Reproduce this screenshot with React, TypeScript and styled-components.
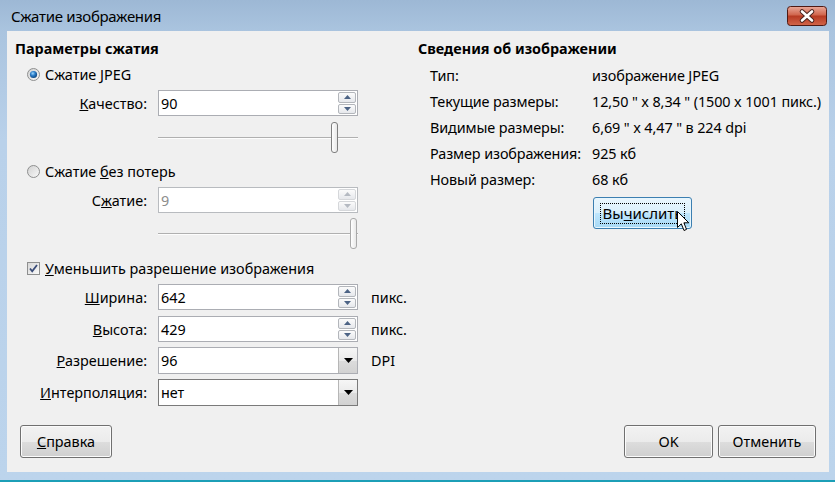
import { Fragment } from 'react'
import styled, { createGlobalStyle } from 'styled-components'

const GlobalStyle = createGlobalStyle`
  html, body {
    margin: 0;
    padding: 0;
    width: 835px;
    height: 482px;
    overflow: hidden;
  }
  body {
    font-family: "Noto Sans", "Open Sans", sans-serif;
    font-size: 14.4px;
    color: #000;
  }
  * { box-sizing: border-box; }
`

const Window = styled.div`
  width: 835px;
  height: 482px;
  display: flex;
  flex-direction: column;
  background: linear-gradient(#9db8d5 0px, #aac4df 31px, #b9d1ea 140px, #bcd4ec 100%);
  border-bottom: 2px solid #1c9fb7;
`

const TitleBar = styled.div`
  height: 31px;
  flex: none;
  display: flex;
  align-items: center;
  justify-content: space-between;
  padding: 0 8px 0 11px;
`

const Title = styled.span`
  font-size: 15px;
  letter-spacing: -0.3px;
`

const Panel = styled.div`
  flex: 1;
  margin: 0 6px 8px 7px;
  background: #f0f0f0;
  display: flex;
  flex-direction: column;
  padding: 10px 13px 14px 8px;
`

const Main = styled.div`
  flex: 1;
  display: flex;
`

const LeftCol = styled.div`
  width: 403px;
  flex: none;
  display: flex;
  flex-direction: column;
`

const RightCol = styled.div`
  flex: 1;
  min-width: 0;
  display: flex;
  flex-direction: column;
  white-space: nowrap;
`

const Heading = styled.div`
  font-weight: 700;
  line-height: 16px;
  height: 16px;
`

const OptionRow = styled.div<{ $mt: number }>`
  margin-top: ${p => p.$mt}px;
  height: 16px;
  display: flex;
  align-items: center;
  gap: 5px;
  padding-left: 12px;
`

const FieldRow = styled.div<{ $mt: number; $h: number }>`
  margin-top: ${p => p.$mt}px;
  height: ${p => p.$h}px;
  display: grid;
  grid-template-columns: 143px 200px auto;
  align-items: center;
`

const Label = styled.span`
  text-align: right;
  padding-right: 11px;
`

const Unit = styled.span`
  padding-left: 13px;
`

const TextBox = styled.div<{ $disabled?: boolean; $dark?: boolean }>`
  height: 100%;
  display: flex;
  align-items: center;
  padding-left: 2px;
  background: #fff;
  border: 1px solid ${p => (p.$dark ? '#7a7a7a' : p.$disabled ? '#b8bbbf' : '#abadb3')};
  color: ${p => (p.$disabled ? '#8d8d8d' : '#000')};
`

const Value = styled.span`
  flex: 1;
`

const Spinner = styled.div`
  width: 19px;
  height: 100%;
  display: flex;
  flex-direction: column;
  gap: 1px;
  padding: 1px 1px 1px 0;
`

const SpinButton = styled.div<{ $disabled?: boolean }>`
  flex: 1;
  display: flex;
  align-items: center;
  justify-content: center;
  border: 1px solid ${p => (p.$disabled ? '#d5d7da' : '#b3b6bb')};
  border-radius: 2px;
  background: linear-gradient(#fbfbfb, #e6e8ec);
`

const DropButton = styled.div`
  width: 19px;
  height: 100%;
  display: flex;
  align-items: center;
  justify-content: center;
  border-left: 1px solid #b6b6b6;
  background: linear-gradient(#f6f6f6 0%, #eaeaea 50%, #dcdcdc 51%, #d2d2d2 100%);
`

const Slider = styled.div<{ $mt: number }>`
  margin-top: ${p => p.$mt}px;
  margin-left: 143px;
  width: 200px;
  height: 34px;
  position: relative;
`

const Track = styled.div`
  position: absolute;
  left: 0;
  right: 0;
  top: 17px;
  height: 2px;
  border-top: 1px solid #b0b0b0;
  border-bottom: 1px solid #fdfdfd;
  background: #e4e4e4;
`

const Thumb = styled.div<{ $disabled?: boolean }>`
  position: absolute;
  top: 2px;
  width: 7px;
  height: 31px;
  border: 1px solid ${p => (p.$disabled ? '#a9a9a9' : '#7f7f7f')};
  border-radius: 3px;
  background: linear-gradient(90deg, #ffffff, #e8e8e8);
`

const InfoGrid = styled.div`
  margin-top: 5px;
  padding-left: 12px;
  display: grid;
  grid-template-columns: 162px max-content;
  grid-auto-rows: 26px;
  align-items: center;
  letter-spacing: -0.1px;
`

const Button = styled.div<{ $w: number; $active?: boolean }>`
  width: ${p => p.$w}px;
  height: 33px;
  flex: none;
  display: flex;
  align-items: center;
  justify-content: center;
  position: relative;
  border: 1px solid ${p => (p.$active ? '#3c7fb1' : '#707070')};
  border-radius: 3px;
  box-shadow: inset 0 0 0 1px ${p => (p.$active ? '#e8f6fd' : '#fbfbfb')};
  background: ${p =>
    p.$active
      ? 'linear-gradient(#eaf6fd 0%, #d9f0fc 50%, #bee6fd 51%, #a7d9f5 100%)'
      : 'linear-gradient(#f2f2f2 0%, #ebebeb 50%, #dddddd 51%, #cfcfcf 100%)'};
`

const FocusRect = styled.span`
  padding: 0 2px;
  line-height: 19px;
  border: 1px dotted #000;
`

const CalcButton = styled(Button)`
  margin-top: 5px;
  margin-left: 175px;
  height: 32px;
  font-size: 15px;
`

const Cursor = styled.svg`
  position: absolute;
  left: 83px;
  top: 13px;
`

const Footer = styled.div`
  height: 33px;
  display: flex;
  align-items: center;
  padding-left: 5px;
  gap: 5px;
`

const Spacer = styled.div`
  flex: 1;
`

const Radio = ({ checked }: { checked?: boolean }) => (
  <svg width="13" height="13" viewBox="0 0 13 13">
    <defs>
      <linearGradient id={checked ? 'rbg1' : 'rbg0'} x1="0" y1="0" x2="1" y2="1">
        <stop offset="0" stopColor="#d0d0d0" />
        <stop offset="1" stopColor="#fafafa" />
      </linearGradient>
      <radialGradient id="rdot" cx="0.4" cy="0.35" r="0.7">
        <stop offset="0" stopColor="#9cd6fb" />
        <stop offset="0.45" stopColor="#2a7cc8" />
        <stop offset="1" stopColor="#0b3f75" />
      </radialGradient>
    </defs>
    <circle cx="6.5" cy="6.5" r="6" fill={`url(#${checked ? 'rbg1' : 'rbg0'})`} stroke="#8e8f8f" />
    {checked && <circle cx="6.5" cy="6.5" r="3.6" fill="url(#rdot)" />}
  </svg>
)

const Check = () => (
  <svg width="13" height="13" viewBox="0 0 13 13">
    <defs>
      <linearGradient id="cbg" x1="0" y1="0" x2="1" y2="1">
        <stop offset="0" stopColor="#d6d6d6" />
        <stop offset="1" stopColor="#fbfbfb" />
      </linearGradient>
    </defs>
    <rect x="0.5" y="0.5" width="12" height="12" fill="url(#cbg)" stroke="#8e8f8f" />
    <path d="M3 6.5 L5.2 9.3 L10 3" fill="none" stroke="#3a4c78" strokeWidth="1.8" />
  </svg>
)

const Arrow = ({ down, disabled }: { down?: boolean; disabled?: boolean }) => (
  <svg width="7" height="4" viewBox="0 0 7 4">
    <path d={down ? 'M0 0 H7 L3.5 4 Z' : 'M3.5 0 L7 4 H0 Z'} fill={disabled ? '#b5bac2' : '#4c6385'} />
  </svg>
)

const Spin = ({ disabled }: { disabled?: boolean }) => (
  <Spinner>
    <SpinButton $disabled={disabled}>
      <Arrow disabled={disabled} />
    </SpinButton>
    <SpinButton $disabled={disabled}>
      <Arrow down disabled={disabled} />
    </SpinButton>
  </Spinner>
)

const Drop = () => (
  <DropButton>
    <svg width="9" height="5" viewBox="0 0 9 5">
      <path d="M0 0 H9 L4.5 5 Z" fill="#000" />
    </svg>
  </DropButton>
)

const CloseButton = () => (
  <svg width="40" height="20" viewBox="0 0 40 20">
    <defs>
      <linearGradient id="cls" x1="0" y1="0" x2="0" y2="1">
        <stop offset="0" stopColor="#e9a99a" />
        <stop offset="0.45" stopColor="#d0654c" />
        <stop offset="0.5" stopColor="#b63a22" />
        <stop offset="1" stopColor="#d2664b" />
      </linearGradient>
    </defs>
    <rect x="0.5" y="0.5" width="39" height="19" rx="3" fill="url(#cls)" stroke="#4f1a14" />
    <path d="M15 5.5 L25 14.5 M25 5.5 L15 14.5" stroke="#4a2520" strokeWidth="4.6" strokeLinecap="round" />
    <path d="M15 5.5 L25 14.5 M25 5.5 L15 14.5" stroke="#fff" strokeWidth="2.6" strokeLinecap="round" />
  </svg>
)

const info: [string, string][] = [
  ['Тип:', 'изображение JPEG'],
  ['Текущие размеры:', '12,50 " x 8,34 " (1500 x 1001 пикс.)'],
  ['Видимые размеры:', '6,69 " x 4,47 " в 224 dpi'],
  ['Размер изображения:', '925 кб'],
  ['Новый размер:', '68 кб'],
]

export default function App() {
  const quality = 90
  const lossless = 9
  return (
    <Window>
      <GlobalStyle />
      <TitleBar>
        <Title>Сжатие изображения</Title>
        <CloseButton />
      </TitleBar>
      <Panel>
        <Main>
          <LeftCol>
            <Heading>Параметры сжатия</Heading>
            <OptionRow $mt={9}>
              <Radio checked />
              <span>Сжатие <u>J</u>PEG</span>
            </OptionRow>
            <FieldRow $mt={8} $h={26}>
              <Label><u>К</u>ачество:</Label>
              <TextBox>
                <Value>{quality}</Value>
                <Spin />
              </TextBox>
            </FieldRow>
            <Slider $mt={4}>
              <Track />
              <Thumb style={{ left: Math.round((quality / 100) * 192) }} />
            </Slider>
            <OptionRow $mt={9}>
              <Radio />
              <span>Сжатие <u>б</u>ез потерь</span>
            </OptionRow>
            <FieldRow $mt={8} $h={26}>
              <Label>С<u>ж</u>атие:</Label>
              <TextBox $disabled>
                <Value>{lossless}</Value>
                <Spin disabled />
              </TextBox>
            </FieldRow>
            <Slider $mt={3}>
              <Track />
              <Thumb $disabled style={{ left: Math.round((lossless / 9) * 192) }} />
            </Slider>
            <OptionRow $mt={10}>
              <Check />
              <span><u>У</u>меньшить разрешение изображения</span>
            </OptionRow>
            <FieldRow $mt={8} $h={26}>
              <Label><u>Ш</u>ирина:</Label>
              <TextBox>
                <Value>642</Value>
                <Spin />
              </TextBox>
              <Unit>пикс.</Unit>
            </FieldRow>
            <FieldRow $mt={6} $h={26}>
              <Label><u>В</u>ысота:</Label>
              <TextBox>
                <Value>429</Value>
                <Spin />
              </TextBox>
              <Unit>пикс.</Unit>
            </FieldRow>
            <FieldRow $mt={5} $h={27}>
              <Label><u>Р</u>азрешение:</Label>
              <TextBox>
                <Value>96</Value>
                <Drop />
              </TextBox>
              <Unit>DPI</Unit>
            </FieldRow>
            <FieldRow $mt={5} $h={27}>
              <Label><u>И</u>нтерполяция:</Label>
              <TextBox $dark>
                <Value>нет</Value>
                <Drop />
              </TextBox>
            </FieldRow>
          </LeftCol>
          <RightCol>
            <Heading>Сведения об изображении</Heading>
            <InfoGrid>
              {info.map(([k, v]) => (
                <Fragment key={k}>
                  <span>{k}</span>
                  <span>{v}</span>
                </Fragment>
              ))}
            </InfoGrid>
            <CalcButton $w={99} $active>
              <FocusRect>Вы<u>ч</u>ислить</FocusRect>
              <Cursor width="13" height="21" viewBox="0 0 13 21">
                <path d="M0.5 0.5 V16.5 L4.3 12.8 L7 19.5 L9.5 18.4 L6.9 11.8 H11.8 Z" fill="#fff" stroke="#000" />
              </Cursor>
            </CalcButton>
          </RightCol>
        </Main>
        <Footer>
          <Button $w={92}><span><u>С</u>правка</span></Button>
          <Spacer />
          <Button $w={89}>OK</Button>
          <Button $w={98}>Отменить</Button>
        </Footer>
      </Panel>
    </Window>
  )
}
